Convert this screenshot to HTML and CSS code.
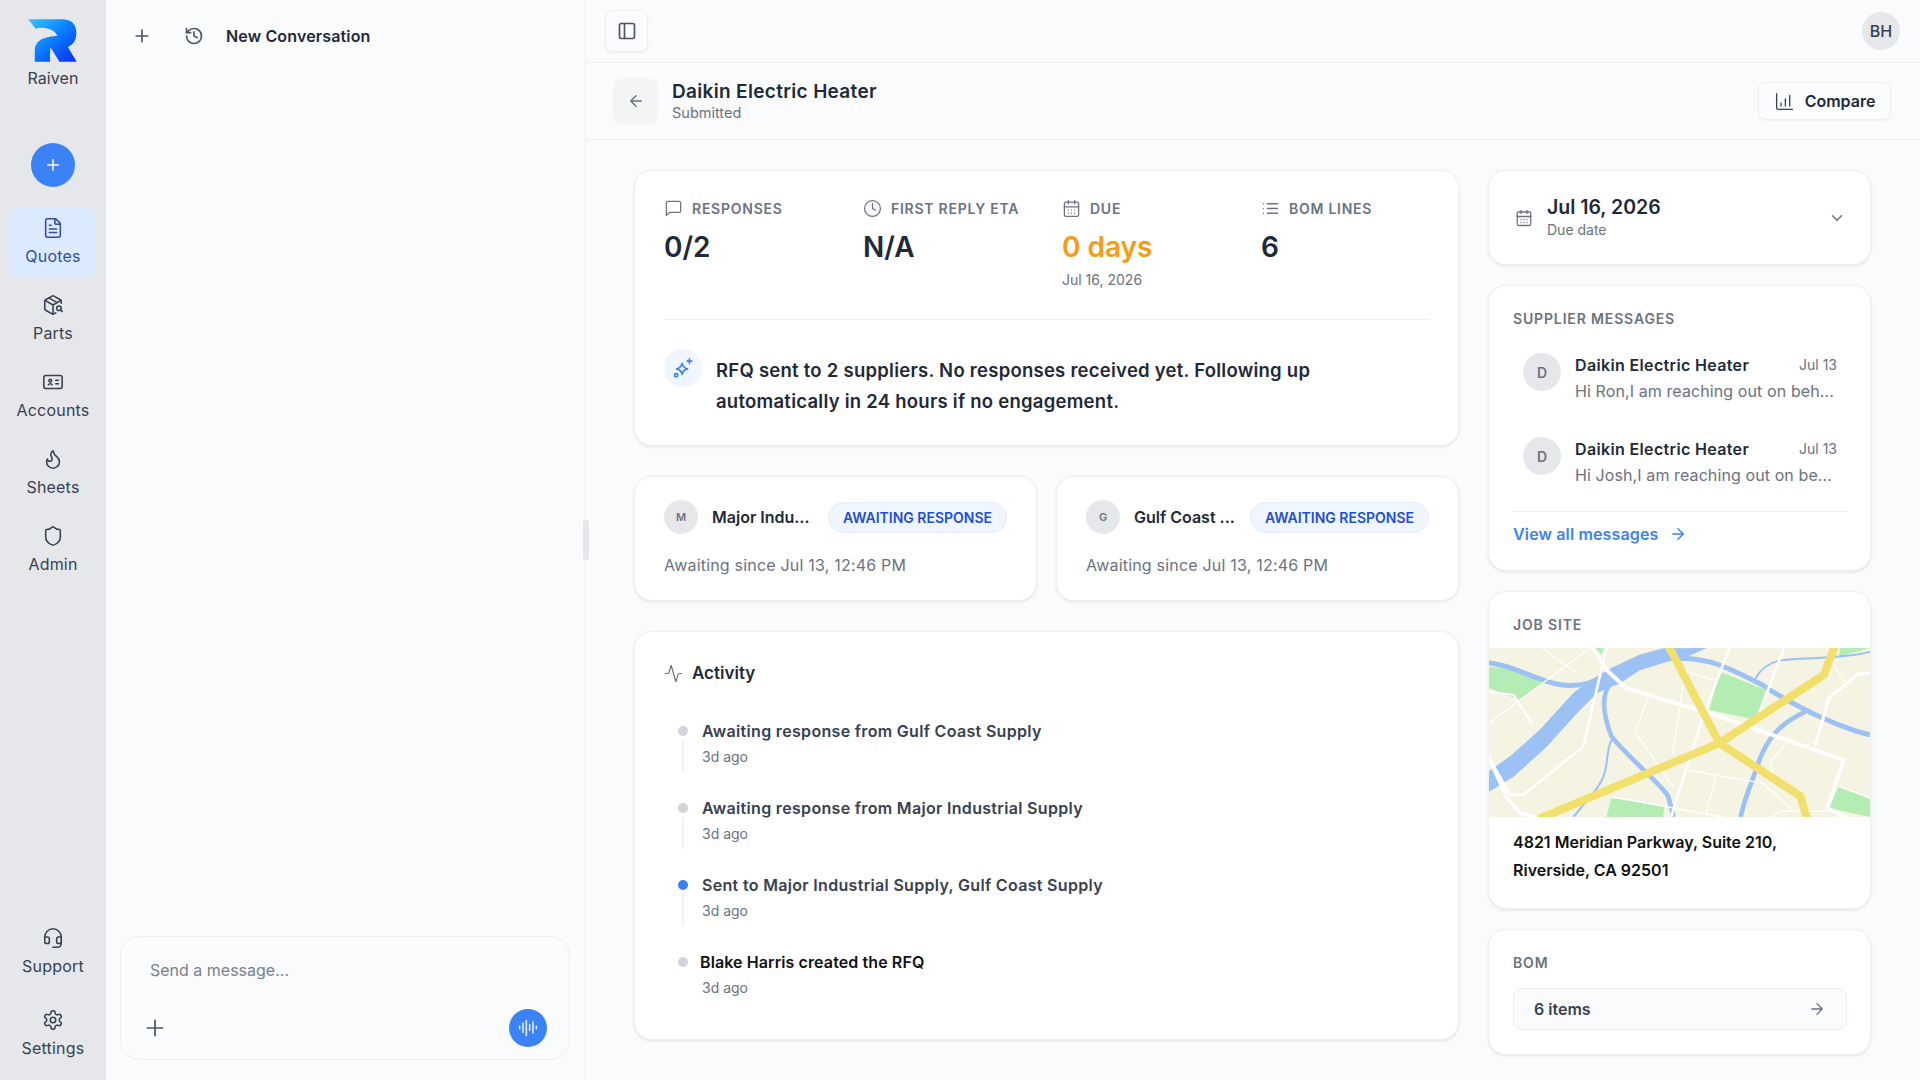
FILE: index.html
```html
<!DOCTYPE html>
<html lang="en">
<head>
<meta charset="utf-8">
<title>Daikin Electric Heater</title>
<link rel="stylesheet" href="styles.css">
</head>
<body>
<div class="app">
  <aside class="sidebar">
    <div class="brand">
      <svg class="logo" viewBox="85 58 145 126">
        <defs><linearGradient id="lg" x1="0" y1="0" x2="1" y2="1"><stop offset="0" stop-color="#35c8ff"/><stop offset=".5" stop-color="#0a7cff"/><stop offset="1" stop-color="#0a2cf0"/></linearGradient></defs>
        <path fill="url(#lg)" d="M85 58H185Q228 58 228 100Q228 128 203 140L229 184H178L152 142Q150 150 150 160V184H105V150Q105 120 140 112Q160 106 172 108Q165 88 135 84Q118 82 108 86Z"/>
      </svg>
      <div class="brand-name">Raiven</div>
    </div>
    <button class="new-btn"><svg class="ic" viewBox="0 0 24 24"><path d="M5 12h14M12 5v14"/></svg></button>
    <nav class="nav">
      <a class="nav-item active"><svg class="ic" viewBox="0 0 24 24"><path d="M15 2H6a2 2 0 0 0-2 2v16a2 2 0 0 0 2 2h12a2 2 0 0 0 2-2V7Z"/><path d="M14 2v4a2 2 0 0 0 2 2h4M10 9H8M16 13H8M16 17H8"/></svg><span>Quotes</span></a>
      <a class="nav-item"><svg class="ic" viewBox="0 0 24 24"><path d="M21 10V8a2 2 0 0 0-1-1.730l-7-4a2 2 0 0 0-2 0l-7 4A2 2 0 0 0 3 8v8a2 2 0 0 0 1 1.730l7 4a2 2 0 0 0 2 0l2-1.140"/><path d="m7.500 4.270 9 5.150M3.300 7 12 12l8.700-5M12 22V12"/><circle cx="18.500" cy="15.500" r="2.500"/><path d="M20.270 17.270 22 19"/></svg><span>Parts</span></a>
      <a class="nav-item"><svg class="ic" viewBox="0 0 24 24"><rect x="2" y="5" width="20" height="14" rx="2"/><path d="M15 10h3M15 14h3M7 15c.5-1.500 3.500-1.500 4 0"/><circle cx="9" cy="10.500" r="1.500"/></svg><span>Accounts</span></a>
      <a class="nav-item"><svg class="ic" viewBox="0 0 24 24"><path d="M8.500 14.500A2.500 2.500 0 0 0 11 12c0-1.380-.5-2-1-3-1.072-2.143-.224-4.054 2-6 .5 2.500 2 4.900 4 6.500 2 1.600 3 3.500 3 5.500a7 7 0 1 1-14 0c0-1.153.433-2.294 1-3a2.500 2.500 0 0 0 2.500 2.500z"/></svg><span>Sheets</span></a>
      <a class="nav-item"><svg class="ic" viewBox="0 0 24 24"><path d="M20 13c0 5-3.500 7.500-7.660 8.950a1 1 0 0 1-.67-.01C7.500 20.500 4 18 4 13V6a1 1 0 0 1 1-1c2 0 4.500-1.200 6.240-2.720a1.170 1.170 0 0 1 1.520 0C14.510 3.810 17 5 19 5a1 1 0 0 1 1 1z"/></svg><span>Admin</span></a>
    </nav>
    <nav class="nav-bottom">
      <a class="nav-item"><svg class="ic" viewBox="0 0 24 24"><path d="M3 11h3a2 2 0 0 1 2 2v3a2 2 0 0 1-2 2H5a2 2 0 0 1-2-2v-5Zm0 0a9 9 0 1 1 18 0m0 0v5a2 2 0 0 1-2 2h-1a2 2 0 0 1-2-2v-3a2 2 0 0 1 2-2h3Z"/><path d="M21 16v2a4 4 0 0 1-4 4h-5"/></svg><span>Support</span></a>
      <a class="nav-item"><svg class="ic" viewBox="0 0 24 24"><path d="M12.220 2h-.44a2 2 0 0 0-2 2v.18a2 2 0 0 1-1 1.730l-.43.25a2 2 0 0 1-2 0l-.15-.08a2 2 0 0 0-2.730.73l-.22.38a2 2 0 0 0 .73 2.730l.15.1a2 2 0 0 1 1 1.720v.510a2 2 0 0 1-1 1.740l-.15.09a2 2 0 0 0-.73 2.730l.22.38a2 2 0 0 0 2.730.73l.15-.08a2 2 0 0 1 2 0l.43.25a2 2 0 0 1 1 1.730V20a2 2 0 0 0 2 2h.44a2 2 0 0 0 2-2v-.18a2 2 0 0 1 1-1.730l.43-.25a2 2 0 0 1 2 0l.15.08a2 2 0 0 0 2.730-.73l.22-.39a2 2 0 0 0-.73-2.730l-.15-.08a2 2 0 0 1-1-1.740v-.5a2 2 0 0 1 1-1.740l.15-.09a2 2 0 0 0 .73-2.730l-.22-.38a2 2 0 0 0-2.730-.73l-.15.08a2 2 0 0 1-2 0l-.43-.25a2 2 0 0 1-1-1.730V4a2 2 0 0 0-2-2z"/><circle cx="12" cy="12" r="3"/></svg><span>Settings</span></a>
    </nav>
  </aside>

  <section class="chat">
    <header class="chat-head">
      <svg class="ic ic-20" viewBox="0 0 24 24"><path d="M5 12h14M12 5v14"/></svg>
      <svg class="ic ic-20" viewBox="0 0 24 24"><path d="M3 12a9 9 0 1 0 9-9 9.750 9.750 0 0 0-6.740 2.740L3 8"/><path d="M3 3v5h5M12 7v5l4 2"/></svg>
      <span class="chat-title">New Conversation</span>
    </header>
    <div class="chat-body"></div>
    <div class="composer">
      <div class="placeholder">Send a message...</div>
      <div class="composer-row">
        <svg class="ic ic-22" viewBox="0 0 24 24"><path d="M5 12h14M12 5v14"/></svg>
        <button class="mic"><svg class="ic" viewBox="0 0 24 24"><path d="M2 10v3M6 6v11M10 3v18M14 8v7M18 5v13M22 10v3"/></svg></button>
      </div>
    </div>
    <div class="resize-handle"></div>
  </section>

  <main class="main">
    <div class="topbar">
      <button class="toggle"><svg class="ic" viewBox="0 0 24 24"><rect x="3" y="3" width="18" height="18" rx="2"/><path d="M9 3v18"/></svg></button>
      <div class="user">BH</div>
    </div>
    <div class="subbar">
      <button class="back"><svg class="ic" viewBox="0 0 24 24"><path d="m12 19-7-7 7-7M19 12H5"/></svg></button>
      <div class="heading">
        <div class="heading-title">Daikin Electric Heater</div>
        <div class="heading-sub">Submitted</div>
      </div>
      <button class="compare"><svg class="ic" viewBox="0 0 24 24"><path d="M3 3v16a2 2 0 0 0 2 2h16M8 17v-3M13 17V9M18 17V5"/></svg>Compare</button>
    </div>

    <div class="content">
      <div class="col-left">
        <section class="card rfq">
          <div class="stats">
            <div class="stat">
              <div class="stat-label"><svg class="ic" viewBox="0 0 24 24"><path d="M21 15a2 2 0 0 1-2 2H7l-4 4V5a2 2 0 0 1 2-2h14a2 2 0 0 1 2 2z"/></svg>Responses</div>
              <div class="stat-value">0/2</div>
            </div>
            <div class="stat">
              <div class="stat-label"><svg class="ic" viewBox="0 0 24 24"><circle cx="12" cy="12" r="10"/><path d="M12 6v6l4 2"/></svg>First reply ETA</div>
              <div class="stat-value">N/A</div>
            </div>
            <div class="stat">
              <div class="stat-label"><svg class="ic" viewBox="0 0 24 24"><path d="M8 2v4M16 2v4"/><rect x="3" y="4" width="18" height="18" rx="2"/><path d="M3 10h18M8 14h.01M12 14h.01M16 14h.01M8 18h.01M12 18h.01M16 18h.01"/></svg>Due</div>
              <div class="stat-value due">0 days</div>
              <div class="stat-sub">Jul 16, 2026</div>
            </div>
            <div class="stat">
              <div class="stat-label"><svg class="ic" viewBox="0 0 24 24"><path d="M3 6h.01M8 6h13M3 12h.01M8 12h13M3 18h.01M8 18h13"/></svg>BOM lines</div>
              <div class="stat-value">6</div>
            </div>
          </div>
          <div class="summary">
            <div class="spark"><svg class="ic" viewBox="0 0 24 24"><path d="M11 7c.8 3.800 2.200 5.200 6 6-3.800.8-5.200 2.200-6 6-.8-3.800-2.200-5.200-6-6 3.800-.8 5.200-2.200 6-6z"/><path d="M19 2v5M16.500 4.500h5"/><circle cx="4.500" cy="20" r="1.800"/></svg></div>
            <p class="summary-text">RFQ sent to 2 suppliers. No responses received yet. Following up automatically in 24 hours if no engagement.</p>
          </div>
        </section>

        <div class="suppliers">
          <section class="card supplier">
            <div class="supplier-row">
              <div class="avatar-s">M</div>
              <div class="supplier-name">Major Indu...</div>
              <div class="badge">AWAITING RESPONSE</div>
            </div>
            <div class="supplier-meta">Awaiting since Jul 13, 12:46 PM</div>
          </section>
          <section class="card supplier">
            <div class="supplier-row">
              <div class="avatar-s">G</div>
              <div class="supplier-name">Gulf Coast ...</div>
              <div class="badge">AWAITING RESPONSE</div>
            </div>
            <div class="supplier-meta">Awaiting since Jul 13, 12:46 PM</div>
          </section>
        </div>

        <section class="card activity">
          <div class="activity-head"><svg class="ic" viewBox="0 0 24 24"><path d="M22 12h-2.480a2 2 0 0 0-1.930 1.460l-2.350 8.360a.25.25 0 0 1-.48 0L9.240 2.180a.25.25 0 0 0-.48 0l-2.350 8.360A2 2 0 0 1 4.490 12H2"/></svg>Activity</div>
          <ol class="timeline">
            <li class="event"><div class="rail"><span class="dot"></span><span class="line"></span></div><div><div class="event-title">Awaiting response from Gulf Coast Supply</div><div class="event-time">3d ago</div></div></li>
            <li class="event"><div class="rail"><span class="dot"></span><span class="line"></span></div><div><div class="event-title">Awaiting response from Major Industrial Supply</div><div class="event-time">3d ago</div></div></li>
            <li class="event"><div class="rail"><span class="dot dot-blue"></span><span class="line"></span></div><div><div class="event-title">Sent to Major Industrial Supply, Gulf Coast Supply</div><div class="event-time">3d ago</div></div></li>
            <li class="event event-last"><div class="rail"><span class="dot"></span></div><div><div class="event-title">Blake Harris created the RFQ</div><div class="event-time">3d ago</div></div></li>
          </ol>
        </section>
      </div>

      <div class="col-right">
        <section class="card date-card">
          <svg class="ic date-ic" viewBox="0 0 24 24"><path d="M8 2v4M16 2v4"/><rect x="3" y="4" width="18" height="18" rx="2"/><path d="M3 10h18M8 14h.01M12 14h.01M16 14h.01M8 18h.01M12 18h.01M16 18h.01"/></svg>
          <div class="date-text">
            <div class="date-main">Jul 16, 2026</div>
            <div class="date-sub">Due date</div>
          </div>
          <svg class="ic chev" viewBox="0 0 24 24"><path d="m6 9 6 6 6-6"/></svg>
        </section>

        <section class="card messages">
          <h3 class="section-label">Supplier messages</h3>
          <div class="msg">
            <div class="avatar-m">D</div>
            <div class="msg-body">
              <div class="msg-top"><span class="msg-name">Daikin Electric Heater</span><span class="msg-date">Jul 13</span></div>
              <div class="msg-preview">Hi Ron,I am reaching out on beh...</div>
            </div>
          </div>
          <div class="msg">
            <div class="avatar-m">D</div>
            <div class="msg-body">
              <div class="msg-top"><span class="msg-name">Daikin Electric Heater</span><span class="msg-date">Jul 13</span></div>
              <div class="msg-preview">Hi Josh,I am reaching out on be...</div>
            </div>
          </div>
          <div class="view-all">View all messages<svg class="ic" viewBox="0 0 24 24"><path d="M5 12h14M12 5l7 7-7 7"/></svg></div>
        </section>

        <section class="card job">
          <h3 class="section-label">Job site</h3>
          <svg class="map" viewBox="0 0 1148 508" preserveAspectRatio="none">
            <rect width="1148" height="508" fill="#f5f3e1"/>
            <g fill="#b4edb4">
              <path d="M0 56 60 62 174 100 92 156 0 120Z"/>
              <path d="M694 71 834 126 804 216 664 186Z"/>
              <path d="M369 451 529 476 524 508H354Z"/>
              <path d="M1054 416 1148 451V508L1024 481Z"/>
              <path d="M319 0H346L339 21Z"/>
              <path d="M1059 0H1148L1054 26Z"/>
            </g>
            <g fill="none" stroke="#9cc1f5" stroke-linejoin="round">
              <path fill="#9cc1f5" stroke-width="2" d="M0 371 64 326 154 246 254 136 309 96 369 61 454 21 524 2 654 0 584 31 534 41 454 66 394 106 354 121 324 136 264 196 174 296 74 386 0 431Z"/>
              <path stroke-width="15" d="M0 44C60 50 110 80 174 100 230 118 290 118 344 86"/>
              <path stroke-width="15" d="M574 31C620 32 660 38 694 51 760 76 800 100 824 111 880 150 920 170 974 196 1040 226 1090 248 1148 261"/>
              <path stroke-width="6" d="M804 91C820 60 850 44 874 38 940 26 1060 36 1148 11"/>
              <path stroke-width="14" d="M364 110C340 140 340 190 369 266 430 340 520 410 540 446L556 508"/>
              <path stroke-width="6" d="M369 276C345 330 370 370 314 436L254 508"/>
              <path stroke-width="14" d="M954 191C890 220 840 260 810 350 790 410 770 450 758 508"/>
            </g>
            <g fill="none" stroke="#fff" stroke-linejoin="round" stroke-linecap="round">
              <path stroke-width="4" d="M0 226 304 0M159 0 259 71"/>
              <path stroke-width="6" d="M0 131 74 141 129 226"/>
              <path stroke-width="4" d="M479 156 439 251 554 416M584 116 554 316M594 71 674 96M594 366 824 406 914 486M684 386 654 496M899 281 849 341 854 396M1034 36 1069 101M854 506 874 491H1024M1054 416 1148 451"/>
              <path stroke-width="5" d="M374 448 704 508"/>
              <path stroke-width="8" d="M724 0 634 236 549 508M889 0 814 196"/>
              <path stroke-width="8" d="M354 0 284 296 104 441H64L0 331"/>
              <path stroke-width="11" d="M0 331 54 450 94 496 150 512"/>
              <path stroke-width="12" d="M314 0 354 66 414 121 664 196 1069 336 1019 481 1080 512"/>
              <path stroke-width="10" d="M984 291 1024 151 1114 76H1148"/>
            </g>
            <g fill="none" stroke="#f2e06d" stroke-width="24" stroke-linejoin="round">
              <path d="M539-10 694 286 939 446 959 518"/>
              <path d="M150 514 694 286 1009 81 1044-10"/>
            </g>
          </svg>
          <div class="address">4821 Meridian Parkway, Suite 210,<br>Riverside, CA 92501</div>
        </section>

        <section class="card bom">
          <h3 class="section-label">BOM</h3>
          <div class="bom-box"><span>6 items</span><svg class="ic" viewBox="0 0 24 24"><path d="M5 12h14M12 5l7 7-7 7"/></svg></div>
        </section>
      </div>
    </div>
  </main>
</div>
</body>
</html>
```

FILE: styles.css
```css
* { box-sizing: border-box; }
html, body { margin: 0; height: 100%; }
body {
  font-family: Inter, "Noto Sans", sans-serif;
  color: #1f2937;
  background: #f9fbfd;
  overflow: hidden;
}
button { font: inherit; color: inherit; padding: 0; cursor: pointer; }
h3, p, ol { margin: 0; padding: 0; }
.app { display: flex; height: 1080px; }

.ic {
  width: 20px; height: 20px; flex: none;
  fill: none; stroke: currentColor; stroke-width: 2;
  stroke-linecap: round; stroke-linejoin: round;
}
.ic-20 { width: 20px; height: 20px; }
.ic-22 { width: 26px; height: 26px; stroke-width: 1.6; }

/* Sidebar */
.sidebar {
  width: 106px; flex: none; background: #e5e7eb;
  display: flex; flex-direction: column; align-items: center;
  padding: 19px 0 10px;
}
.brand { display: flex; flex-direction: column; align-items: center; }
.logo { width: 49px; height: 43px; }
.brand-name { font-size: 16px; line-height: 24px; margin-top: 4px; color: #374151; letter-spacing: .1px; }
.new-btn {
  width: 44px; height: 44px; border-radius: 50%; border: 0;
  background: #3b82f6; color: #fff; margin-top: 53px;
  display: flex; align-items: center; justify-content: center; flex: none;
}
.new-btn .ic { width: 18px; height: 18px; }
.nav { display: flex; flex-direction: column; gap: 6px; margin-top: 20px; width: 86px; }
.nav-bottom { display: flex; flex-direction: column; gap: 11px; margin-top: auto; width: 86px; }
.nav-item {
  height: 71px; border-radius: 10px; padding-top: 10px;
  display: flex; flex-direction: column; align-items: center; gap: 5px;
  font-size: 16px; line-height: 24px; color: #374151; letter-spacing: .2px;
}
.nav-item .ic { width: 22px; height: 22px; stroke-width: 1.7; }
.nav-item.active { background: #dbeafe; color: #3350a0; }

/* Chat */
.chat {
  width: 480px; flex: none; position: relative;
  display: flex; flex-direction: column;
  border-right: 1px solid #eceef1;
  padding: 0 15px 20px 14px;
}
.chat-head { height: 72px; display: flex; align-items: center; padding-left: 12px; color: #4b5563; }
.chat-head .ic + .ic { margin-left: 32px; }
.chat-title { margin-left: 22px; font-size: 16px; font-weight: 600; letter-spacing: .15px; color: #1f2937; }
.chat-body { flex: 1; }
.composer {
  height: 124px; border: 1px solid #eceef1; border-radius: 20px;
  padding: 21px 22px 12px 29px;
  display: flex; flex-direction: column; justify-content: space-between;
}
.placeholder { font-size: 16px; line-height: 24px; color: #7b8189; }
.composer-row { display: flex; align-items: center; justify-content: space-between; margin-left: -8px; color: #4b5563; }
.mic {
  width: 38px; height: 38px; border-radius: 50%; border: 0;
  background: #3b82f6; color: #dbeafe;
  display: flex; align-items: center; justify-content: center;
}
.resize-handle {
  position: absolute; right: -4px; top: 520px;
  width: 6px; height: 40px; border-radius: 3px; background: #e5e7eb;
}

/* Main */
.main { flex: 1; min-width: 0; display: flex; flex-direction: column; }
.topbar {
  height: 63px; flex: none; border-bottom: 1px solid #eceef1;
  display: flex; align-items: center; justify-content: space-between;
  padding: 0 20px 1px 19px;
}
.toggle {
  width: 43px; height: 42px; border: 1px solid #eceef1; border-radius: 8px;
  background: #fbfcfe; color: #4b5563; box-shadow: 0 1px 2px rgba(0,0,0,.05);
  display: flex; align-items: center; justify-content: center;
}
.user {
  width: 38px; height: 38px; border-radius: 50%; background: #e5e7eb;
  display: flex; align-items: center; justify-content: center;
  font-size: 16px; font-weight: 500; color: #374151;
}
.subbar {
  height: 77px; flex: none; border-bottom: 1px solid #eceef1;
  display: flex; align-items: center; padding: 0 29px 0 27px;
}
.back {
  width: 45px; height: 47px; border: 0; border-radius: 10px; background: #f3f4f6;
  color: #6b7280; display: flex; align-items: center; justify-content: center;
}
.back .ic { width: 18px; height: 18px; }
.heading { margin-left: 14px; flex: 1; }
.heading-title { font-size: 19px; line-height: 26px; font-weight: 600; letter-spacing: .33px; color: #1f2937; }
.heading-sub { font-size: 14.500px; line-height: 20px; margin-top: -2px; color: #6b7280; }
.compare {
  width: 133px; height: 38px; border: 1px solid #eceef1; border-radius: 8px;
  background: #fbfcfe; box-shadow: 0 1px 2px rgba(0,0,0,.05);
  display: flex; align-items: center; justify-content: center; gap: 10px;
  font-size: 16px; font-weight: 600; color: #1f2937;
}
.compare .ic { width: 21px; height: 21px; color: #374151; stroke-width: 1.5; }

.content {
  flex: 1; min-height: 0; display: grid;
  grid-template-columns: 825px 383px; column-gap: 29px;
  padding: 30px 0 0 48px; align-content: start;
}
.col-left { display: flex; flex-direction: column; gap: 30px; }
.col-right { display: flex; flex-direction: column; gap: 20px; }
.card {
  background: #fff; border: 1px solid #f0f1f3; border-radius: 18px;
  box-shadow: 0 1px 3px rgba(0,0,0,.1);
}

.rfq { height: 276px; padding: 27px 29px 0; }
.stats {
  display: grid; grid-template-columns: repeat(4, 167px); column-gap: 32px;
  height: 122px; border-bottom: 1px solid #eceef1;
}
.stat-label {
  display: flex; align-items: center; gap: 9px; height: 20px;
  font-size: 14px; font-weight: 600; letter-spacing: .75px;
  text-transform: uppercase; color: #6b7280; white-space: nowrap;
}
.stat-label .ic { width: 19px; height: 19px; stroke-width: 1.6; color: #6b7280; }
.stat-value { font-size: 28px; line-height: 36px; font-weight: 600; margin-top: 11px; color: #1f2937; }
.stat-value.due { color: #f89b12; }
.stat-sub { font-size: 14px; line-height: 20px; margin-top: 5px; color: #6b7280; }
.summary { display: flex; gap: 14px; padding-top: 29px; }
.spark {
  width: 38px; height: 38px; border-radius: 50%; background: #eff6ff; color: #3b82f6;
  display: flex; align-items: center; justify-content: center; flex: none;
}
.spark .ic { width: 22px; height: 22px; stroke-width: 1.8; }
.summary-text { font-size: 18.500px; line-height: 31px; font-weight: 600; letter-spacing: .25px; color: #1f2937; width: 660px; padding-top: 6px; }

.suppliers { display: grid; grid-template-columns: 403px 403px; column-gap: 19px; }
.supplier { height: 125px; padding: 23px 29px 0; }
.supplier-row { display: flex; align-items: center; height: 34px; }
.avatar-s {
  width: 34px; height: 34px; border-radius: 50%; background: #e5e7eb; flex: none;
  display: flex; align-items: center; justify-content: center;
  font-size: 11px; font-weight: 600; color: #6b7280;
}
.supplier-name { margin-left: 14px; flex: 1; min-width: 0; font-size: 16px; font-weight: 600; white-space: nowrap; color: #1f2937; }
.badge {
  flex: none; margin-left: 15px; width: 179px; height: 31px; border-radius: 16px;
  background: #eff6ff; border: 1px solid #e3edfb; color: #1d4ed8;
  display: flex; align-items: center; justify-content: center;
  font-size: 14px; font-weight: 600; white-space: nowrap;
}
.supplier-meta { margin-top: 19px; font-size: 16px; line-height: 24px; letter-spacing: .2px; color: #6b7280; }

.activity { height: 409px; padding: 29px 29px 0; }
.activity-head { display: flex; align-items: center; gap: 9px; height: 24px; font-size: 17px; font-weight: 600; }
.activity-head .ic { width: 19px; height: 19px; stroke-width: 1.5; color: #6b7280; }
.timeline { list-style: none; margin-top: 34px; padding-left: 14px; }
.event { display: flex; gap: 14px; height: 77px; }
.rail { width: 10px; display: flex; flex-direction: column; align-items: center; padding-top: 7px; }
.dot { width: 10px; height: 10px; border-radius: 50%; background: #d1d5db; flex: none; }
.dot-blue { background: #3b82f6; }
.line { width: 2px; height: 32px; margin-top: 4px; background: #f0f1f3; }
.event-title { font-size: 16px; line-height: 24px; font-weight: 600; letter-spacing: .32px; color: #374151; }
.event-time { font-size: 14px; line-height: 20px; margin-top: 4px; color: #6b7280; }
.event-last .event-title { color: #111; margin-left: -2px; letter-spacing: .1px; }

.date-card { height: 95px; display: flex; align-items: center; padding: 0 24px 0 26px; }
.date-ic { width: 18px; height: 18px; color: #6b7280; stroke-width: 1.7; }
.date-text { margin-left: 14px; flex: 1; margin-top: -2px; }
.date-main { font-size: 19.500px; line-height: 26px; font-weight: 600; }
.date-sub { font-size: 14px; line-height: 20px; color: #6b7280; }
.chev { width: 18px; height: 18px; color: #6b7280; }

.section-label {
  font-size: 14px; line-height: 20px; font-weight: 600; letter-spacing: .85px;
  text-transform: uppercase; color: #6b7280;
}
.messages { height: 286px; padding: 23px 23px 0 24px; }
.messages .section-label { margin-bottom: 24px; }
.msg { display: flex; gap: 14px; padding: 0 10px; height: 84px; }
.avatar-m {
  width: 38px; height: 38px; border-radius: 50%; background: #e5e7eb; flex: none;
  display: flex; align-items: center; justify-content: center;
  font-size: 14px; font-weight: 600; color: #6b7280;
}
.msg-body { flex: 1; min-width: 0; }
.msg-top { display: flex; justify-content: space-between; line-height: 24px; }
.msg-name { font-size: 16px; font-weight: 600; letter-spacing: .35px; color: #1f2937; }
.msg-date { font-size: 14px; color: #6b7280; }
.msg-preview { margin-top: 2px; font-size: 16px; line-height: 24px; letter-spacing: .1px; color: #6b7280; white-space: nowrap; }
.view-all {
  border-top: 1px solid #eceef1; margin-top: -10px; padding-top: 10px;
  display: flex; align-items: center; gap: 10px;
  font-size: 16px; line-height: 24px; font-weight: 600; letter-spacing: .15px; color: #3b82f6;
}
.view-all .ic { width: 18px; height: 18px; }

.job { height: 318px; padding-top: 23px; overflow: hidden; }
.job .section-label { padding-left: 24px; margin-bottom: 13px; }
.map { display: block; width: 100%; height: 169px; }
.address { padding: 11px 23px 0 24px; font-size: 16px; line-height: 28px; font-weight: 600; color: #111; }

.bom { height: 126px; padding: 23px 23px 0 24px; }
.bom-box {
  margin-top: 15px; height: 42px; border: 1px solid #eceef1; border-radius: 8px; background: #f9fbfd;
  display: flex; align-items: center; justify-content: space-between; padding: 0 20px;
  font-size: 16px; font-weight: 600; color: #374151;
}
.bom-box .ic { width: 18px; height: 18px; color: #6b7280; stroke-width: 1.7; }
```
